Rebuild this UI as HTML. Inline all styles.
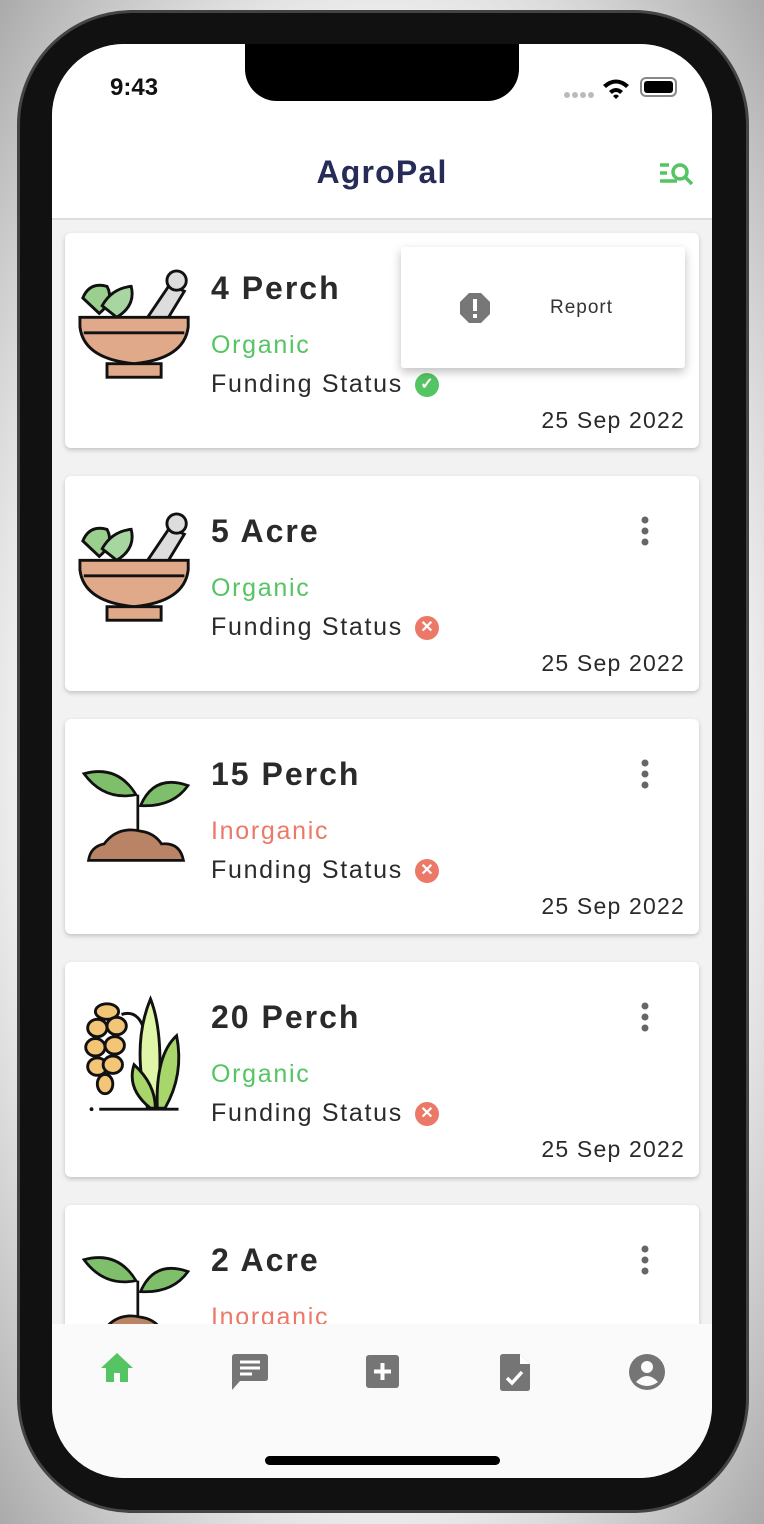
<!DOCTYPE html>
<html><head><meta charset="utf-8"><style>
*{margin:0;padding:0;box-sizing:border-box}
body{width:764px;height:1524px;overflow:hidden;background:#fff;font-family:"Liberation Sans",sans-serif;position:relative}
.bg{position:absolute;inset:0;background:radial-gradient(ellipse at center,#fff 60%,#aaa 100%)}
.phone{position:absolute;left:17px;top:10px;width:732px;height:1503px;border-radius:115px;background:#111;border:3px solid #444}
.screen{position:absolute;left:52px;top:44px;width:660px;height:1434px;border-radius:72px;overflow:hidden;background:#f2f2f2}
.notch{position:absolute;left:193px;top:0;width:274px;height:57px;background:#000;border-radius:0 0 32px 32px}
.header{position:absolute;left:0;top:0;width:660px;height:176px;background:#fff;border-bottom:2px solid #ddd}
.time{position:absolute;left:58px;top:30px;font-size:24px;font-weight:bold;color:#111}
.title{position:absolute;left:0;width:660px;top:110px;text-align:center;font-size:32px;font-weight:bold;color:#262c57;letter-spacing:1.2px}
.card{position:absolute;left:13px;width:634px;height:215px;background:#fff;border-radius:6px;box-shadow:0 2px 5px rgba(0,0,0,.2)}
.card h2{position:absolute;left:146px;top:37px;font-size:32px;color:#2a2a2a;letter-spacing:2px}
.org{position:absolute;left:146px;top:98px;font-size:25px;color:#55c463;letter-spacing:1.7px}
.inorg{color:#ec7867}
.fund{position:absolute;left:146px;top:137px;font-size:25px;color:#2a2a2a;display:flex;align-items:center;letter-spacing:1.7px}
.fund span{display:inline-block;width:24px;height:24px;border-radius:50%;margin-left:12px;color:#fff;font-size:16px;text-align:center;line-height:24px;font-weight:bold;letter-spacing:0}
.date{position:absolute;right:14px;top:174px;font-size:23px;color:#2a2a2a;letter-spacing:1.2px}
.keb{position:absolute;left:576px;top:40px}
.ic{position:absolute;left:13px;top:34px}
.nav{position:absolute;left:0;top:1280px;width:660px;height:154px;background:#fafafa}
.popup{position:absolute;left:349px;top:203px;width:284px;height:121px;background:#fff;border-radius:3px;box-shadow:0 4px 10px rgba(0,0,0,.25)}
</style></head><body>
<div class="bg"></div>
<div class="phone"></div>
<div class="screen">
<div class="card" style="top:189px">
<svg class="ic" width="116" height="118" viewBox="0 0 120 122"><path d="M5 32 Q12 15 30 20 Q38 35 22 48Z" fill="#9bcf8e" stroke="#111" stroke-width="3"/><path d="M25 40 Q35 22 55 20 Q60 40 40 52Z" fill="#a8d6a0" stroke="#111" stroke-width="3"/><path d="M70 55 L95 18 L110 25 L90 58Z" fill="#ddd" stroke="#111" stroke-width="3"/><circle cx="102" cy="14" r="10" fill="#ddd" stroke="#111" stroke-width="3"/><path d="M2 52 H114 V62 Q110 95 58 100 Q6 95 2 62Z" fill="#dfa98a" stroke="#111" stroke-width="3"/><rect x="30" y="100" width="56" height="14" fill="#dfa98a" stroke="#111" stroke-width="3"/><path d="M6 68 H110" stroke="#111" stroke-width="3"/></svg>
<h2>4 Perch</h2><div class="org">Organic</div><div class="fund">Funding Status<span style="background:#55c463">✓</span></div><div class="date">25 Sep 2022</div></div>
<div class="card" style="top:432px">
<svg class="ic" width="116" height="118" viewBox="0 0 120 122"><path d="M5 32 Q12 15 30 20 Q38 35 22 48Z" fill="#9bcf8e" stroke="#111" stroke-width="3"/><path d="M25 40 Q35 22 55 20 Q60 40 40 52Z" fill="#a8d6a0" stroke="#111" stroke-width="3"/><path d="M70 55 L95 18 L110 25 L90 58Z" fill="#ddd" stroke="#111" stroke-width="3"/><circle cx="102" cy="14" r="10" fill="#ddd" stroke="#111" stroke-width="3"/><path d="M2 52 H114 V62 Q110 95 58 100 Q6 95 2 62Z" fill="#dfa98a" stroke="#111" stroke-width="3"/><rect x="30" y="100" width="56" height="14" fill="#dfa98a" stroke="#111" stroke-width="3"/><path d="M6 68 H110" stroke="#111" stroke-width="3"/></svg>
<h2>5 Acre</h2><div class="org">Organic</div><div class="fund">Funding Status<span style="background:#ec7867">✕</span></div><div class="date">25 Sep 2022</div>
<svg class="keb" width="8" height="30"><circle cx="4" cy="4" r="3.5" fill="#666"/><circle cx="4" cy="15" r="3.5" fill="#666"/><circle cx="4" cy="26" r="3.5" fill="#666"/></svg></div>
<div class="card" style="top:675px">
<svg class="ic" width="116" height="104" viewBox="0 0 120 114" style="top:41px"><path d="M3 15 Q40 5 60 38 Q25 45 3 15Z" fill="#7fbf6c" stroke="#111" stroke-width="3"/><path d="M117 28 Q80 15 65 50 Q100 52 117 28Z" fill="#7fbf6c" stroke="#111" stroke-width="3"/><path d="M62 38 V78" stroke="#111" stroke-width="3"/><path d="M8 110 Q10 95 25 92 Q40 72 65 78 Q80 80 88 92 Q108 90 112 110Z" fill="#b98466" stroke="#111" stroke-width="3"/></svg>
<h2>15 Perch</h2><div class="org inorg">Inorganic</div><div class="fund">Funding Status<span style="background:#ec7867">✕</span></div><div class="date">25 Sep 2022</div>
<svg class="keb" width="8" height="30"><circle cx="4" cy="4" r="3.5" fill="#666"/><circle cx="4" cy="15" r="3.5" fill="#666"/><circle cx="4" cy="26" r="3.5" fill="#666"/></svg></div>
<div class="card" style="top:918px">
<svg class="ic" width="116" height="122" viewBox="0 0 120 122" style="top:33px"><g fill="#f2c676" stroke="#111" stroke-width="3"><ellipse cx="30" cy="15" rx="12" ry="8"/><ellipse cx="20" cy="32" rx="10" ry="9"/><ellipse cx="40" cy="30" rx="10" ry="9"/><ellipse cx="18" cy="52" rx="10" ry="9"/><ellipse cx="38" cy="50" rx="10" ry="9"/><ellipse cx="20" cy="72" rx="10" ry="9"/><ellipse cx="36" cy="70" rx="10" ry="9"/><ellipse cx="28" cy="90" rx="8" ry="10"/></g><path d="M45 18 Q70 10 72 60" fill="none" stroke="#111" stroke-width="3"/><path d="M72 115 Q55 50 75 2 Q90 40 82 115Z" fill="#dff5a8" stroke="#111" stroke-width="3"/><path d="M82 115 Q80 60 102 40 Q110 80 90 115Z" fill="#a8d66a" stroke="#111" stroke-width="3"/><path d="M75 115 Q50 95 58 70 Q80 90 80 115Z" fill="#a8d66a" stroke="#111" stroke-width="3"/><path d="M22 116 H104" stroke="#111" stroke-width="3"/><circle cx="14" cy="116" r="2" fill="#111"/></svg>
<h2>20 Perch</h2><div class="org">Organic</div><div class="fund">Funding Status<span style="background:#ec7867">✕</span></div><div class="date">25 Sep 2022</div>
<svg class="keb" width="8" height="30"><circle cx="4" cy="4" r="3.5" fill="#666"/><circle cx="4" cy="15" r="3.5" fill="#666"/><circle cx="4" cy="26" r="3.5" fill="#666"/></svg></div>
<div class="card" style="top:1161px">
<svg class="ic" width="116" height="104" viewBox="0 0 120 114" style="top:41px"><path d="M3 15 Q40 5 60 38 Q25 45 3 15Z" fill="#7fbf6c" stroke="#111" stroke-width="3"/><path d="M117 28 Q80 15 65 50 Q100 52 117 28Z" fill="#7fbf6c" stroke="#111" stroke-width="3"/><path d="M62 38 V78" stroke="#111" stroke-width="3"/><path d="M8 110 Q10 95 25 92 Q40 72 65 78 Q80 80 88 92 Q108 90 112 110Z" fill="#b98466" stroke="#111" stroke-width="3"/></svg>
<h2>2 Acre</h2><div class="org inorg">Inorganic</div>
<svg class="keb" width="8" height="30"><circle cx="4" cy="4" r="3.5" fill="#666"/><circle cx="4" cy="15" r="3.5" fill="#666"/><circle cx="4" cy="26" r="3.5" fill="#666"/></svg></div>
<div class="popup"><svg style="position:absolute;left:58px;top:45px" width="32" height="32" viewBox="0 0 32 32"><path d="M10 1H22L31 10V22L22 31H10L1 22V10Z" fill="#777"/><rect x="14" y="7" width="4" height="12" fill="#fff"/><rect x="14" y="22" width="4" height="4" fill="#fff"/></svg><div style="position:absolute;left:149px;top:50px;font-size:19px;color:#333;letter-spacing:1px">Report</div></div>
<div class="header"><div class="time">9:43</div>
<svg style="position:absolute;left:512px;top:47px" width="30" height="8"><circle cx="3" cy="4" r="3" fill="#bbb"/><circle cx="11" cy="4" r="3" fill="#bbb"/><circle cx="19" cy="4" r="3" fill="#bbb"/><circle cx="27" cy="4" r="3" fill="#bbb"/></svg>
<svg style="position:absolute;left:550px;top:33px" width="28" height="22" viewBox="0 0 28 22"><path d="M1 8 Q14 -3 27 8 L24 11 Q14 2 4 11Z M7 14 Q14 8 21 14 L18 17 Q14 13 10 17Z M11 19 L14 22 L17 19 Q14 16 11 19Z" fill="#000"/></svg>
<div style="position:absolute;left:588px;top:33px;width:37px;height:20px;border:2px solid #888;border-radius:6px;padding:2px"><div style="width:100%;height:100%;background:#000;border-radius:3px"></div></div>
<div class="title">AgroPal</div>
<svg style="position:absolute;left:607px;top:118px" width="38" height="26" viewBox="0 0 38 26"><g stroke="#55c463" stroke-width="3.5" fill="none"><path d="M1 3H10M1 11H8M1 19H18"/><circle cx="21" cy="10" r="7"/><path d="M26 15L33 22"/></g></svg></div>
<div class="notch"></div>
<div class="nav">
<svg style="position:absolute;left:48px;top:28px" width="34" height="30" viewBox="0 0 34 30"><path d="M17 1L1 16H6V30H14V21H20V30H28V16H33Z" fill="#55c463"/></svg>
<svg style="position:absolute;left:180px;top:30px" width="36" height="36" viewBox="0 0 36 36"><path d="M3 0H33Q36 0 36 3V24Q36 27 33 27H8L0 36V3Q0 0 3 0Z" fill="#757575"/><path d="M8 8H28M8 14H28M8 20H20" stroke="#fff" stroke-width="3"/></svg>
<svg style="position:absolute;left:314px;top:31px" width="33" height="33" viewBox="0 0 33 33"><rect width="33" height="33" rx="3" fill="#757575"/><path d="M16.5 8V25M8 16.5H25" stroke="#fff" stroke-width="4"/></svg>
<svg style="position:absolute;left:448px;top:30px" width="30" height="37" viewBox="0 0 30 37"><path d="M3 0H20L30 10V34Q30 37 27 37H3Q0 37 0 34V3Q0 0 3 0Z" fill="#757575"/><path d="M20 0V10H30" fill="#fff"/><path d="M7 24L12 29L22 18" stroke="#fff" stroke-width="3.5" fill="none"/></svg>
<svg style="position:absolute;left:577px;top:30px" width="36" height="36" viewBox="0 0 36 36"><circle cx="18" cy="18" r="18" fill="#757575"/><circle cx="18" cy="13" r="6" fill="#fafafa"/><path d="M7 28Q18 16 29 28Q18 36 7 28Z" fill="#fafafa"/></svg>
<div style="position:absolute;left:213px;top:132px;width:235px;height:9px;background:#000;border-radius:5px"></div>
</div>
</div>
</body></html>
